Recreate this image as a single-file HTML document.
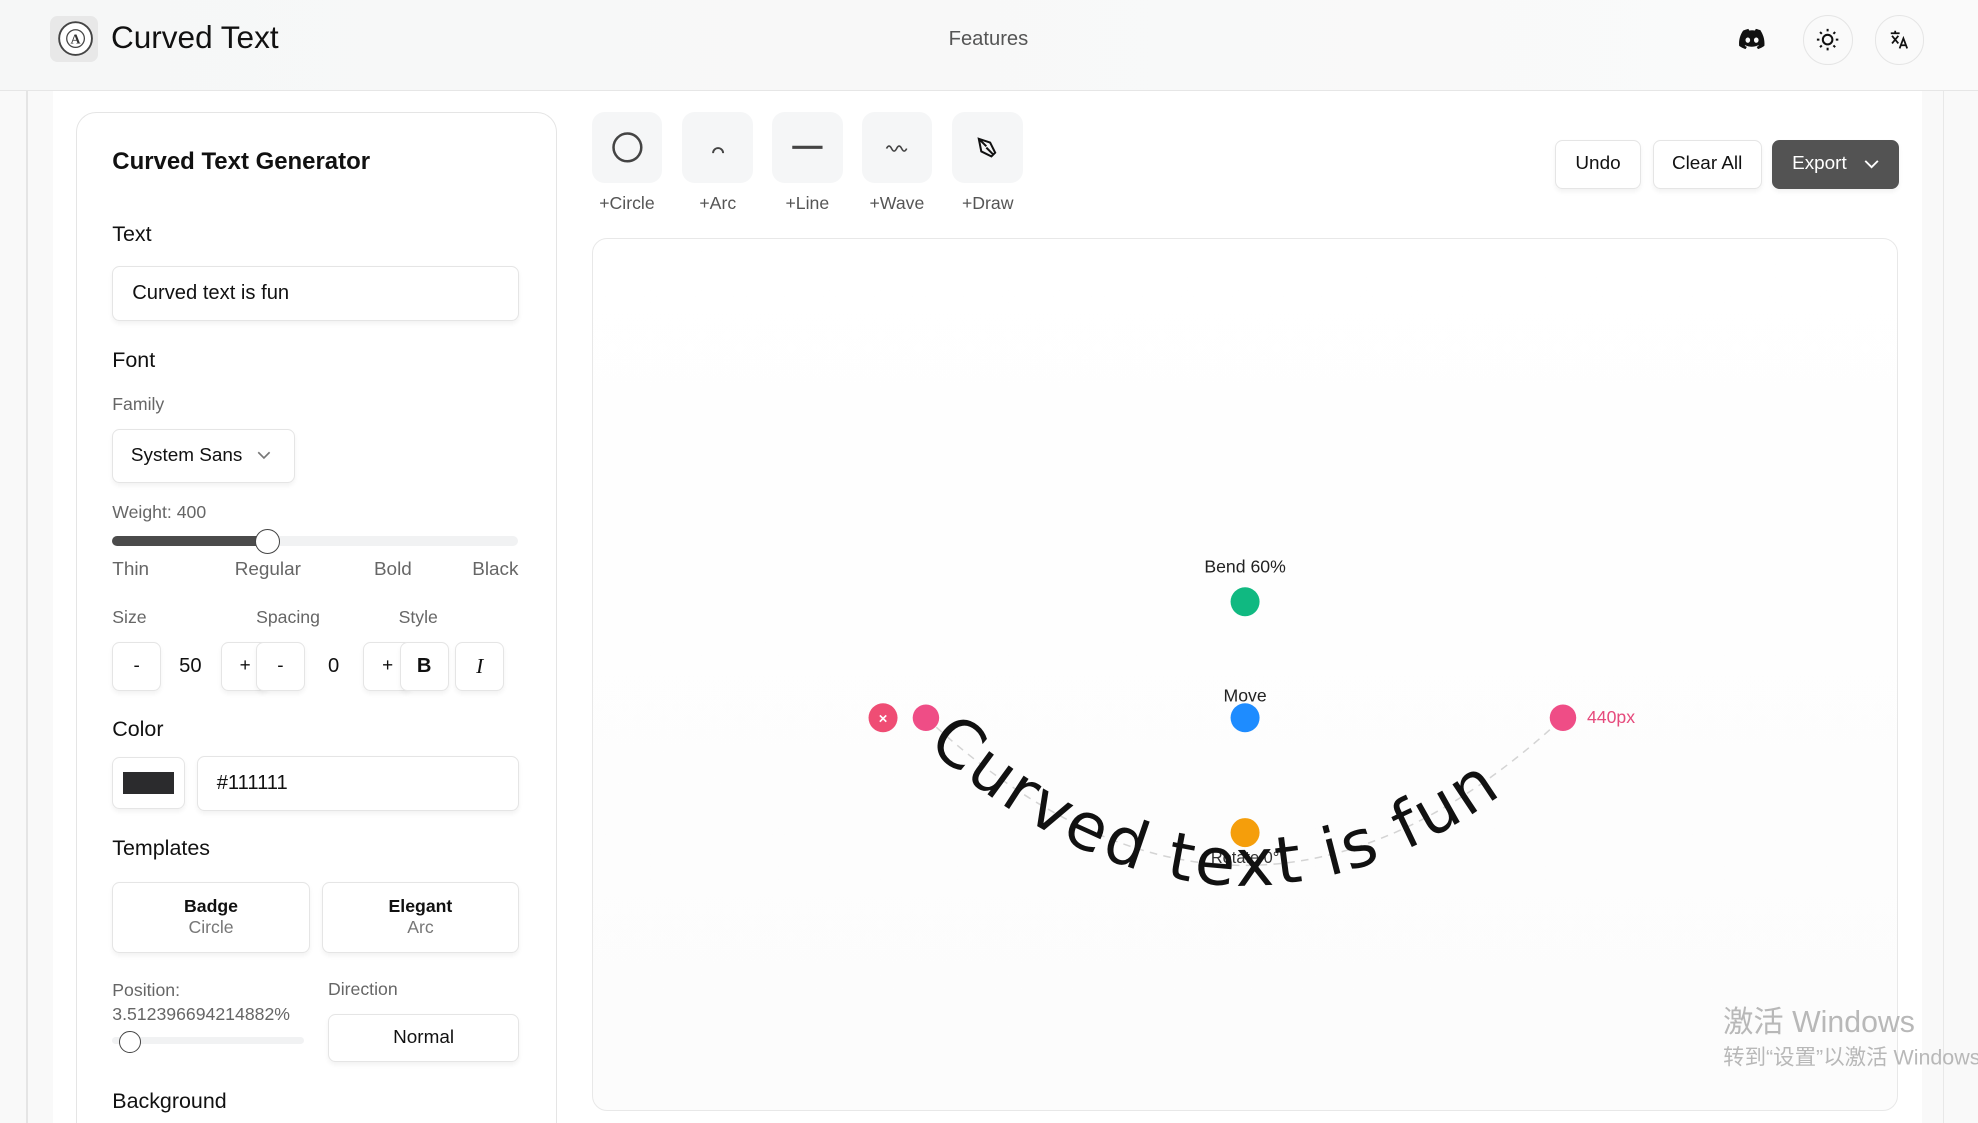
<!DOCTYPE html>
<html><head><meta charset="utf-8"><style>
html,body{margin:0;padding:0;background:#f7f7f7;overflow:hidden}
#r{zoom:1.26148;width:1568px;height:890px;position:relative;font-family:"Liberation Sans","Noto Sans CJK SC",sans-serif;color:#111;background:#f9f9f9;overflow:hidden}
.a{position:absolute}
.hdr{left:0;top:0;width:1568px;height:71px;background:linear-gradient(90deg,#f6f7f7,#fafafa);border-bottom:1px solid #e6e6e6}
.card{background:#fff;border:1px solid #e5e5e5;border-radius:12px}
.btn{background:#fff;border:1px solid #e5e5e5;border-radius:6px;box-shadow:0 2px 4px rgba(0,0,0,.05);display:flex;align-items:center;justify-content:center;font-size:15px}
.lbl{font-size:17px;color:#111}
.sub{font-size:14px;color:#666}
.tool{width:56px;height:56px;background:#f5f6f7;border-radius:10px;display:flex;align-items:center;justify-content:center}
.tl{font-size:14px;color:#555;width:70px;text-align:center}
.ic{width:38px;height:38px;border-radius:50%;border:1px solid #e5e5e5;display:flex;align-items:center;justify-content:center}
</style></head><body><div id="r">
<div class="a hdr"></div>
<div class="a" style="left:40px;top:13px;width:38px;height:36px;background:#e8e8e8;border-radius:6px"></div>
<svg class="a" style="left:44px;top:15px" width="31" height="31" viewBox="0 0 31 31"><circle cx="15.5" cy="15.5" r="13" fill="#fff" stroke="#444" stroke-width="1.5"/><circle cx="15.5" cy="15.5" r="7" fill="none" stroke="#444"/><text x="15.5" y="19.5" font-size="11" text-anchor="middle" font-family="Liberation Serif" font-weight="bold" fill="#333">A</text></svg>
<div class="a" style="left:88px;top:15px;font-size:25px;color:#111">Curved Text</div>
<div class="a" style="left:752px;top:22px;font-size:16px;color:#555">Features</div>
<svg class="a" style="left:1378px;top:22px" width="22" height="17" viewBox="0 0 24 18"><path d="M20 2C18.5 1.3 17 .8 15.4.5l-.7 1.4c-1.7-.3-3.4-.3-5 0L9 .5C7.4.8 5.9 1.3 4.4 2 1.4 6.5.6 10.9 1 15.2c1.9 1.4 3.7 2.2 5.5 2.8l1.2-1.9c-.7-.3-1.3-.6-1.9-1l.5-.4c3.6 1.7 7.6 1.7 11.2 0l.5.4c-.6.4-1.2.7-1.9 1l1.2 1.9c1.8-.6 3.6-1.4 5.5-2.8.5-5-.8-9.4-3.3-13.2zM8.5 12.5c-1.1 0-2-1-2-2.3s.9-2.3 2-2.3 2 1 2 2.3-.9 2.3-2 2.3zm7.3 0c-1.1 0-2-1-2-2.3s.9-2.3 2-2.3 2 1 2 2.3-.9 2.3-2 2.3z" fill="#111"/></svg>
<div class="a ic" style="left:1429px;top:12px"><svg width="20" height="20" viewBox="0 0 20 20" stroke="#111" stroke-width="1.6" fill="none"><circle cx="10" cy="10" r="3.8"/><path d="M10 1.5v2M10 16.5v2M1.5 10h2M16.5 10h2M4 4l1.4 1.4M14.6 14.6L16 16M4 16l1.4-1.4M14.6 5.4L16 4"/></svg></div>
<div class="a ic" style="left:1486px;top:12px"><svg width="20" height="20" viewBox="0 0 20 20" fill="none" stroke="#111" stroke-width="1.4"><path d="M3 5h7M6.5 3v2M4 7l5 6M9 7l-5 6M10 17l3-8 3 8M11 14.5h4"/></svg></div>
<div class="a" style="left:21px;top:72px;width:1px;height:818px;background:#e5e5e5"></div>
<div class="a" style="left:42px;top:72px;width:1482px;height:818px;background:#fff"></div>
<div class="a" style="left:1540px;top:72px;width:1px;height:818px;background:#e8e8e8"></div>
<div class="a card" style="left:60px;top:89px;width:380px;height:820px;border-radius:16px"></div>
<div class="a" style="left:89px;top:117px;font-size:19px;font-weight:600">Curved Text Generator</div>
<div class="a lbl" style="left:89px;top:176px">Text</div>
<div class="a btn" style="left:89px;top:211px;width:321px;height:42px;justify-content:flex-start;font-size:16px"><span style="padding-left:15px">Curved text is fun</span></div>
<div class="a lbl" style="left:89px;top:276px">Font</div>
<div class="a sub" style="left:89px;top:312px">Family</div>
<div class="a btn" style="left:89px;top:340px;width:143px;height:41px;justify-content:flex-start"><span style="padding-left:14px">System Sans</span><svg style="margin-left:12px" width="11" height="7"><path d="M1 1l4.5 4.5L10 1" fill="none" stroke="#777" stroke-width="1.3"/></svg></div>
<div class="a sub" style="left:89px;top:398px">Weight: 400</div>
<div class="a" style="left:89px;top:425px;width:322px;height:8px;border-radius:4px;background:#f1f2f3"></div>
<div class="a" style="left:89px;top:425px;width:124px;height:8px;border-radius:4px;background:#4b4b4b"></div>
<div class="a" style="left:202px;top:419px;width:20px;height:20px;border-radius:50%;background:#fff;border:1px solid #444;box-sizing:border-box"></div>
<div class="a sub" style="left:89px;top:443px;width:322px;display:flex;justify-content:space-between;font-size:15px"><span>Thin</span><span style="margin-left:20px">Regular</span><span style="margin-left:10px">Bold</span><span>Black</span></div>
<div class="a sub" style="left:89px;top:481px">Size</div>
<div class="a sub" style="left:203px;top:481px">Spacing</div>
<div class="a sub" style="left:316px;top:481px">Style</div>
<div class="a btn" style="left:89px;top:509px;width:37px;height:37px">-</div>
<div class="a" style="left:142px;top:519px;font-size:16px">50</div>
<div class="a btn" style="left:175px;top:509px;width:37px;height:37px">+</div>
<div class="a btn" style="left:203px;top:509px;width:37px;height:37px">-</div>
<div class="a" style="left:260px;top:519px;font-size:16px">0</div>
<div class="a btn" style="left:288px;top:509px;width:37px;height:37px">+</div>
<div class="a btn" style="left:317px;top:509px;width:37px;height:37px;font-weight:bold;font-size:16px">B</div>
<div class="a btn" style="left:361px;top:509px;width:37px;height:37px;font-style:italic;font-family:'Liberation Serif';font-size:17px">I</div>
<div class="a lbl" style="left:89px;top:568px">Color</div>
<div class="a btn" style="left:89px;top:600px;width:56px;height:40px"><div style="width:41px;height:17px;background:#2b2b2d"></div></div>
<div class="a btn" style="left:156px;top:599px;width:254px;height:42px;justify-content:flex-start;font-size:16px"><span style="padding-left:15px">#111111</span></div>
<div class="a lbl" style="left:89px;top:663px">Templates</div>
<div class="a btn" style="left:89px;top:699px;width:155px;height:55px;flex-direction:column;font-size:14px"><b>Badge</b><span style="color:#777">Circle</span></div>
<div class="a btn" style="left:255px;top:699px;width:155px;height:55px;flex-direction:column;font-size:14px"><b>Elegant</b><span style="color:#777">Arc</span></div>
<div class="a sub" style="left:89px;top:776px;line-height:19px">Position:<br>3.512396694214882%</div>
<div class="a sub" style="left:260px;top:776px">Direction</div>
<div class="a" style="left:89px;top:822px;width:152px;height:6px;border-radius:3px;background:#f1f2f3"></div>
<div class="a" style="left:94px;top:817px;width:18px;height:18px;border-radius:50%;background:#fff;border:1px solid #444;box-sizing:border-box"></div>
<div class="a btn" style="left:260px;top:804px;width:150px;height:36px">Normal</div>
<div class="a lbl" style="left:89px;top:863px">Background</div>
<div class="a tool" style="left:469px;top:89px"><svg width="26" height="26"><circle cx="13" cy="13" r="11" fill="none" stroke="#444" stroke-width="2"/></svg></div>
<div class="a tool" style="left:541px;top:89px"><svg width="16" height="16"><path d="M4 12a4 4 0 0 1 8 0" fill="none" stroke="#444" stroke-width="1.5"/></svg></div>
<div class="a tool" style="left:612px;top:89px"><svg width="26" height="10"><path d="M1 5h24" stroke="#444" stroke-width="2.5"/></svg></div>
<div class="a tool" style="left:683px;top:89px"><svg width="20" height="10"><path d="M2 6q2-4 4 0t4 0 4 0 4 0" fill="none" stroke="#444" stroke-width="1.3"/></svg></div>
<div class="a tool" style="left:755px;top:89px"><svg width="20" height="20" viewBox="0 0 20 20" fill="none" stroke="#111" stroke-width="1.6"><path d="M3 3l9 3 4 8-3 3-8-4zM3 3l6 6M9 10l5 5"/></svg></div>
<div class="a tl" style="left:462px;top:153px">+Circle</div>
<div class="a tl" style="left:534px;top:153px">+Arc</div>
<div class="a tl" style="left:605px;top:153px">+Line</div>
<div class="a tl" style="left:676px;top:153px">+Wave</div>
<div class="a tl" style="left:748px;top:153px">+Draw</div>
<div class="a btn" style="left:1233px;top:111px;width:66px;height:37px">Undo</div>
<div class="a btn" style="left:1310px;top:111px;width:85px;height:37px">Clear All</div>
<div class="a btn" style="left:1405px;top:111px;width:99px;height:37px;background:#535353;border-color:#535353;color:#fff">Export<svg style="margin-left:14px" width="12" height="8"><path d="M1 1.5l5 5 5-5" fill="none" stroke="#fff" stroke-width="1.5"/></svg></div>
<div class="a" style="left:469px;top:189px;width:1034px;height:690px;border:1px solid #e8e8e8;border-radius:12px;background:linear-gradient(#fff,#fcfcfc)"></div>
<svg class="a" style="left:0;top:0" width="1568" height="890">
<path id="p" d="M734 569 Q987 803 1239 569" fill="none" stroke="#d4d4d4" stroke-width="1.2" stroke-dasharray="6 5"/>
<circle cx="987" cy="660" r="11.5" fill="#f59e0b"/>
<text x="987" y="684" font-size="13" fill="#333" text-anchor="middle">Rotate 0°</text>
<text font-size="52" font-family="DejaVu Sans" fill="#111" dy="16" letter-spacing="1"><textPath href="#p" startOffset="2.5%">Curved text is fun</textPath></text>
<circle cx="987" cy="477" r="11.5" fill="#10b981"/>
<circle cx="987" cy="569" r="11.5" fill="#1e8cff"/>
<circle cx="700" cy="569" r="11.5" fill="#ef4d74"/>
<text x="700" y="573.5" font-size="12" fill="#fff" text-anchor="middle" font-weight="bold">×</text>
<circle cx="734" cy="569" r="10.5" fill="#ef4d86"/>
<circle cx="1239" cy="569" r="10.5" fill="#ef4d86"/>
<text x="1258" y="573" font-size="14" fill="#e64a7c">440px</text>
<text x="987" y="454" font-size="14" fill="#222" text-anchor="middle">Bend 60%</text>
<text x="987" y="556" font-size="14" fill="#222" text-anchor="middle">Move</text>
<text x="1366" y="818" font-size="24" fill="#b8b8b8" font-family="Liberation Sans,Noto Sans CJK SC,sans-serif">激活 Windows</text>
<text x="1366" y="844" font-size="17" fill="#b8b8b8" font-family="Liberation Sans,Noto Sans CJK SC,sans-serif">转到“设置”以激活 Windows。</text>
</svg>
</div></body></html>
